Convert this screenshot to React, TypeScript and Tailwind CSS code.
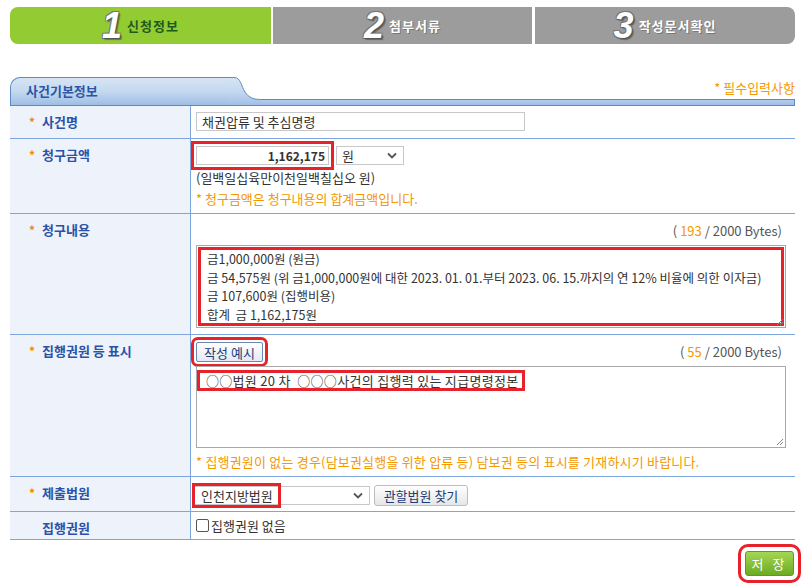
import React from 'react';

const steps = [
  { no: '1', label: '신청정보', active: true },
  { no: '2', label: '첨부서류', active: false },
  { no: '3', label: '작성문서확인', active: false },
];

const numShadow =
  '[text-shadow:1px_1px_0_#555,-1px_-1px_0_#777,1px_-1px_0_#777,-1px_1px_0_#777,2px_2px_1px_rgba(0,0,0,0.35)]';

const Chevron = ({ className = '' }: { className?: string }) => (
  <svg width="10" height="7" viewBox="0 0 10 7" className={className}>
    <polyline points="1,1.5 5,5.5 9,1.5" fill="none" stroke="#555" strokeWidth="1.8" />
  </svg>
);

const Grip = () => (
  <svg width="9" height="9" viewBox="0 0 9 9" className="absolute right-[1px] bottom-[1px]">
    <line x1="8" y1="2" x2="2" y2="8" stroke="#888" strokeWidth="1" />
    <line x1="8" y1="5" x2="5" y2="8" stroke="#888" strokeWidth="1" />
  </svg>
);

const Label = ({ text, required = true }: { text: string; required?: boolean }) => (
  <div className="w-[181px] shrink-0 bg-[#eef3fb] border-r border-[#7ea6de] pl-[19px] pt-[8px] flex items-start">
    <span className="w-[13px] text-[12px] leading-[16px] font-bold text-[#f08a00]">{required ? '*' : ''}</span>
    <span className="text-[13px] leading-[16px] font-bold text-[#2a52a8]">{text}</span>
  </div>
);

const Counter = ({ n }: { n: number }) => (
  <span className="text-[13px] leading-[16px] text-[#555]">
    ( <span className="text-[#f39800]">{n}</span> / 2000 Bytes)
  </span>
);

export default function App() {
  return (
    <div className="w-[806px] h-[583px] bg-white text-[#333] font-['Noto_Sans_CJK_KR',sans-serif] overflow-hidden">
      {/* step tabs */}
      <div className="pt-[7px] pl-[10px] flex gap-[2px]">
        {steps.map((s, i) => (
          <div
            key={s.no}
            className={
              'h-[37px] flex items-center justify-center gap-[5px] ' +
              (s.active ? 'bg-[#93cb33] ' : 'bg-[#9c9c9c] ') +
              (i === 0 ? 'w-[261px] rounded-l-[8px]' : i === 1 ? 'w-[259px] mr-[1px]' : 'w-[260px] rounded-r-[8px]')
            }
          >
            <span className={"font-['Liberation_Sans',sans-serif] italic font-bold text-[36px] leading-none text-white " + numShadow}>
              {s.no}
            </span>
            <span
              className={
                'text-[13px] font-bold tracking-[1px] ' +
                (s.active ? 'text-[#1e5a1e]' : 'text-white [text-shadow:1px_1px_0_#777]')
              }
            >
              {s.label}
            </span>
          </div>
        ))}
      </div>

      {/* section header */}
      <div className="mt-[33px] ml-[10px] w-[785px] flex items-end h-[29px]">
        <div className="w-[219px] h-[29px] rounded-tl-[10px] border-t border-l border-b border-[#5b8bc7] bg-gradient-to-b from-[#d7e5f4] via-[#c4d8ef] to-[#9fbee5] pl-[15px] pt-[5px]">
          <span className="block text-[13px] leading-[16px] font-bold text-[#2a56a8]">사건기본정보</span>
        </div>
        <svg width="32" height="29" viewBox="0 0 32 29" className="shrink-0">
          <defs>
            <linearGradient id="tabg" x1="0" y1="0" x2="0" y2="29" gradientUnits="userSpaceOnUse">
              <stop offset="0" stopColor="#d7e5f4" />
              <stop offset="0.5" stopColor="#c4d8ef" />
              <stop offset="1" stopColor="#9fbee5" />
            </linearGradient>
          </defs>
          <path d="M0 0.5 H5 C12 0.5 12 9 16 15 C20 21 25 22.5 32 22.5 V28.5 H0 Z" fill="url(#tabg)" />
          <path d="M0 0.5 H5 C12 0.5 12 9 16 15 C20 21 25 22.5 32 22.5" fill="none" stroke="#5b8bc7" strokeWidth="1" />
          <line x1="0" y1="28.5" x2="32" y2="28.5" stroke="#5b8bc7" strokeWidth="1" />
        </svg>
        <div className="flex-1 flex flex-col">
          <div className="text-right text-[13px] leading-[16px] text-[#f39800] pb-[3px]">* 필수입력사항</div>
          <div className="h-[7px] border-t border-b border-r border-[#5b8bc7] bg-gradient-to-b from-[#b3cdee] to-[#9fbee5]" />
        </div>
      </div>

      {/* form table */}
      <div className="ml-[10px] w-[785px] text-[13px] leading-[16px]">
        {/* 사건명 */}
        <div className="flex h-[33px] border-b border-[#7ea6de]">
          <Label text="사건명" />
          <div className="flex-1 pl-[5px] pt-[6px]">
            <div className="w-[329px] h-[19px] border border-[#c8c8c8] pl-[5px] flex items-center text-[#333]">
              채권압류 및 추심명령
            </div>
          </div>
        </div>

        {/* 청구금액 */}
        <div className="flex h-[75px] border-b border-[#7ea6de]">
          <Label text="청구금액" />
          <div className="flex-1 pl-[5px] pt-[7px]">
            <div className="flex gap-[7px]">
              <div className="w-[133px] h-[19px] border border-[#c8c8c8] pr-[3px] flex items-center justify-end text-[12px] font-bold text-[#333] outline-[3px] outline-solid outline-[#e8222b] outline-offset-[2px]">
                1,162,175
              </div>
              <div className="w-[68px] h-[19px] border border-[#c8c8c8] pl-[5px] pr-[6px] flex items-center justify-between">
                <span>원</span>
                <Chevron />
              </div>
            </div>
            <div className="mt-[5px]">(일백일십육만이천일백칠십오 원)</div>
            <div className="mt-[5px] text-[#f39800]">* 청구금액은 청구내용의 합계금액입니다.</div>
          </div>
        </div>

        {/* 청구내용 */}
        <div className="flex h-[121px] border-b border-[#7ea6de]">
          <Label text="청구내용" />
          <div className="flex-1 pl-[5px] pr-[9px] pt-[9px]">
            <div className="flex justify-end pr-[4px]">
              <Counter n={193} />
            </div>
            <div className="relative mt-[6px] h-[83px] border border-[#a9a9a9] p-[1px]">
              <div className="h-full border-[3px] border-[#e8222b] pl-[6px] text-[12.5px] leading-[18.5px] text-[#333] whitespace-pre">
                {'금1,000,000원 (원금)\n금 54,575원 (위 금1,000,000원에 대한 2023. 01. 01.부터 2023. 06. 15.까지의 연 12% 비율에 의한 이자금)\n금 107,600원 (집행비용)\n합계  금 1,162,175원'}
              </div>
              <Grip />
            </div>
          </div>
        </div>

        {/* 집행권원 등 표시 */}
        <div className="flex h-[142px] border-b border-[#7ea6de]">
          <Label text="집행권원 등 표시" />
          <div className="flex-1 pl-[5px] pr-[9px] pt-[7px]">
            <div className="flex items-center justify-between pr-[4px]">
              <button className="h-[20px] w-[67px] border border-[#6c86b0] rounded-[2px] bg-gradient-to-b from-white to-[#e3eaf5] text-[13px] leading-none text-[#1c3a78] outline-[3px] outline-solid outline-[#e8222b] outline-offset-[2px]">
                작성 예시
              </button>
              <Counter n={55} />
            </div>
            <div className="relative mt-[4px] h-[82px] border border-[#a9a9a9] pt-[3px]">
              <span className="inline-block h-[21px] border-[3px] border-[#e8222b] pl-[6px] pr-[4px] leading-[15px] tracking-[0.3px] text-[#333] whitespace-pre">
                {'○○법원 20 차  ○○○사건의 집행력 있는 지급명령정본'}
              </span>
              <Grip />
            </div>
            <div className="mt-[6px] text-[#f39800] tracking-[0.2px]">
              * 집행권원이 없는 경우(담보권실행을 위한 압류 등) 담보권 등의 표시를 기재하시기 바랍니다.
            </div>
          </div>
        </div>

        {/* 제출법원 */}
        <div className="flex h-[35px] border-b border-[#7ea6de]">
          <Label text="제출법원" />
          <div className="flex-1 pl-[2px] pt-[8px] flex items-start gap-[4px]">
            <div className="relative mt-[1px] w-[177px] h-[19px] border border-[#c8c8c8] pl-[7px] pr-[6px] flex items-center justify-between text-[#333]">
              <span>인천지방법원</span>
              <Chevron />
              <span className="absolute left-[-2px] top-[-4px] w-[89px] h-[25px] border-[3px] border-[#e8222b]" />
            </div>
            <button className="h-[21px] w-[94px] border border-[#bdbdbd] rounded-[3px] bg-gradient-to-b from-white to-[#e6e6e6] text-[13px] leading-none text-[#1c3a78]">
              관할법원 찾기
            </button>
          </div>
        </div>

        {/* 집행권원 */}
        <div className="flex h-[28px] border-b border-[#7ea6de]">
          <Label text="집행권원" required={false} />
          <div className="flex-1 pl-[5px] flex items-center gap-[2px]">
            <span className="w-[13px] h-[13px] border border-[#555] rounded-[2px] bg-white" />
            <span>집행권원 없음</span>
          </div>
        </div>

        {/* save */}
        <div className="flex justify-end pr-[1px] pt-[11px]">
          <button className="w-[49px] h-[25px] rounded-[3px] border border-[#5f9a1e] bg-gradient-to-b from-[#a4d653] to-[#6cab22] text-white text-[13px] tracking-[3px] outline-[3px] outline-solid outline-[#e8222b] outline-offset-[4px]">
            저 장
          </button>
        </div>
      </div>
    </div>
  );
}
